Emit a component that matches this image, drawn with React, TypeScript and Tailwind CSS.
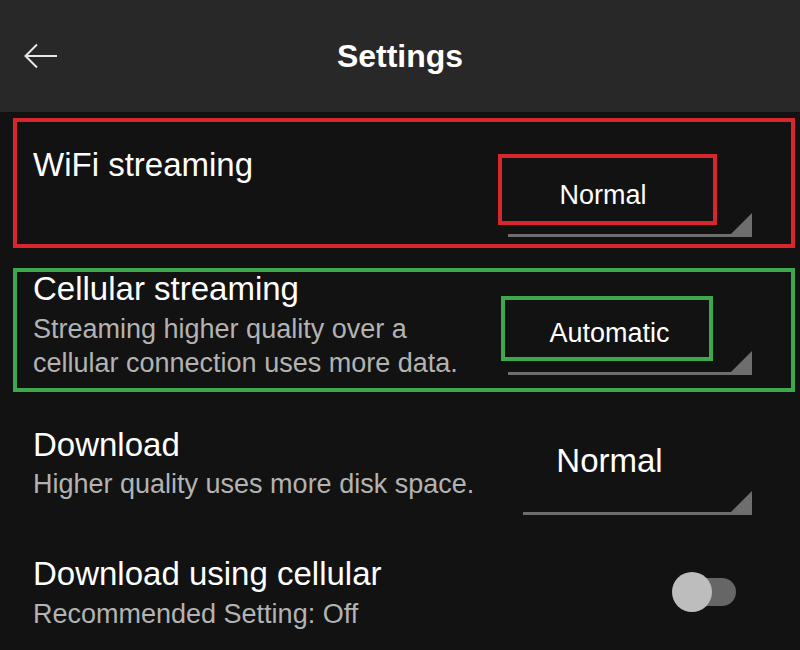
import React from "react";

const Spinner = ({
  value,
  boxClass,
  textClass,
  lineClass,
}: {
  value: string;
  boxClass: string;
  textClass: string;
  lineClass: string;
}) => {
  return (
    <div className="w-[254px] flex flex-col shrink-0">
      <div className={boxClass}>
        <span className={textClass}>{value}</span>
      </div>
      <div className={`relative h-[3px] bg-[#6e6e6e] ${lineClass}`}>
        <svg
          className="absolute right-0 bottom-0"
          width="24"
          height="24"
          viewBox="0 0 24 24"
        >
          <polygon points="24,0 24,24 0,24" fill="#6e6e6e" />
        </svg>
      </div>
    </div>
  );
};

const Toggle = () => (
  <div className="relative w-[64px] h-[40px] shrink-0 mt-[29px]">
    <div className="absolute right-0 top-[6px] w-[50px] h-[28px] rounded-full bg-[#666666]" />
    <div className="absolute left-0 top-0 w-[40px] h-[40px] rounded-full bg-[#bdbdbd]" />
  </div>
);

const App = () => {
  return (
    <div className="min-h-screen w-[800px] h-[650px] overflow-hidden bg-[#121212] text-white font-['Liberation_Sans',Arial,sans-serif]">
      <header className="h-[112px] bg-[#282828] grid grid-cols-[100px_1fr_100px] items-center">
        <button className="pl-6 flex items-center">
          <svg width="34" height="26" viewBox="0 0 34 26" fill="none">
            <path
              d="M1.5 13H33M13 1.5L1.5 13L13 24.5"
              stroke="#e8e8e8"
              strokeWidth="2"
            />
          </svg>
        </button>
        <h1 className="text-center text-[32px] font-bold leading-none">
          Settings
        </h1>
        <div />
      </header>

      <main className="pt-[6px] pl-[13px] pr-[5px] flex flex-col gap-5">
        {/* WiFi streaming */}
        <section className="h-[130px] border-4 border-[#d8262f] flex items-start justify-between pl-4 pr-[39px]">
          <h2 className="pt-[26px] text-[33px] leading-[34px]">
            WiFi streaming
          </h2>
          <Spinner
            value="Normal"
            boxClass="mt-[32px] w-[219px] h-[71px] border-4 border-[#d8262f] flex items-center justify-center pt-[11px] pr-[9px]"
            textClass="text-[27px] leading-none"
            lineClass="mt-[9px] ml-[10px]"
          />
        </section>

        {/* Cellular streaming */}
        <section className="border-4 border-[#3ea84f] flex items-start justify-between pl-4 pr-[39px] pb-2">
          <div>
            <h2 className="text-[33px] leading-[34px]">Cellular streaming</h2>
            <p className="mt-[6px] text-[27px] leading-[34px] text-[#b3b3b3]">
              Streaming higher quality over a
              <br />
              cellular connection uses more data.
            </p>
          </div>
          <Spinner
            value="Automatic"
            boxClass="mt-[24px] ml-[3px] w-[212px] h-[65px] border-4 border-[#3ea84f] flex items-center justify-center pt-[9px] pl-[5px]"
            textClass="text-[27px] leading-none"
            lineClass="mt-[11px] ml-[10px]"
          />
        </section>

        {/* Download */}
        <section className="border-4 border-transparent flex items-start justify-between pl-4 pr-[39px]">
          <div className="pt-3">
            <h2 className="text-[33px] leading-[34px]">Download</h2>
            <p className="mt-[5px] text-[27px] leading-[34px] text-[#b3b3b3]">
              Higher quality uses more disk space.
            </p>
          </div>
          <Spinner
            value="Normal"
            boxClass="mt-[28px] w-[219px] h-[34px] flex items-center justify-center pl-1"
            textClass="text-[33px] leading-[34px]"
            lineClass="mt-[34px] ml-[25px]"
          />
        </section>

        {/* Download using cellular */}
        <section className="border-4 border-transparent flex items-start justify-between pl-4 pr-[55px]">
          <div className="pt-[14px]">
            <h2 className="text-[33px] leading-[34px]">
              Download using cellular
            </h2>
            <p className="mt-[6px] text-[27px] leading-[34px] text-[#b3b3b3]">
              Recommended Setting: Off
            </p>
          </div>
          <Toggle />
        </section>
      </main>
    </div>
  );
};

export default App;
